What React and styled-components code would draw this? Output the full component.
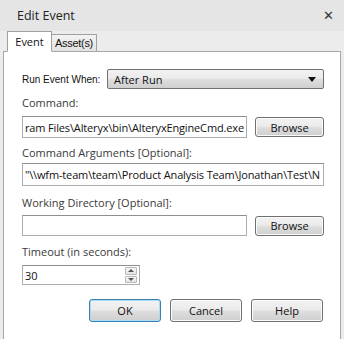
import React from 'react'
import styled, { createGlobalStyle } from 'styled-components'

const GlobalStyle = createGlobalStyle`
  html, body {
    margin: 0;
    padding: 0;
    background: #ececec;
  }
`

const Dialog = styled.div`
  width: 344px;
  height: 339px;
  overflow: hidden;
  background: #ececec;
  font-family: 'Open Sans', 'Noto Sans', sans-serif;
  color: #1e1e1e;
  display: flex;
  flex-direction: column;
`

const TitleBar = styled.div`
  height: 31px;
  flex: none;
  display: flex;
  align-items: center;
  justify-content: space-between;
  padding: 0 10px 0 17px;
  background: #e5e5e5;
  font-size: 12.5px;
  color: #222;
`

const CloseButton = styled.span`
  font-size: 13px;
  line-height: 1;
  color: #333;
  font-family: 'DejaVu Sans', sans-serif;
`

const TabStrip = styled.div`
  height: 20px;
  flex: none;
  display: flex;
  align-items: flex-end;
  padding-left: 7px;
  position: relative;
  z-index: 1;
`

const Tab = styled.div`
  display: flex;
  align-items: center;
  justify-content: center;
  box-sizing: border-box;
  border: 1px solid #a0a0a0;
  border-bottom: ${({ active }) => (active ? '1px solid #fff' : 'none')};
  background: ${({ active }) =>
    active ? '#fff' : 'linear-gradient(#f3f3f3, #e2e2e2)'};
  height: ${({ active }) => (active ? '21px' : '17px')};
  margin-bottom: ${({ active }) => (active ? '-1px' : '0')};
  width: ${({ w }) => w}px;
  margin-left: ${({ active }) => (active ? '0' : '-1px')};
  font-family: ${({ active }) =>
    active ? "'Open Sans', sans-serif" : "'Liberation Sans', Arial, sans-serif"};
  font-size: 11px;
  letter-spacing: ${({ active }) => (active ? '0' : '-0.3px')};
  color: #111;
`

const Panel = styled.div`
  flex: 1;
  margin: 0 3px 0 3px;
  border: 1px solid #a7a7a7;
  border-bottom: none;
  background: #fff;
  padding: 0 16px 0 18px;
  display: flex;
  flex-direction: column;
`

const Row = styled.div`
  display: flex;
  align-items: center;
  margin-top: ${({ mt }) => mt}px;
  height: ${({ h }) => h}px;
`

const SmallLabel = styled.span`
  font-family: 'Liberation Sans', Tahoma, sans-serif;
  font-size: 10px;
  color: #111;
  width: 85px;
  flex: none;
  white-space: nowrap;
`

const Label = styled.div`
  font-size: 11px;
  line-height: 16px;
  height: 16px;
  color: #3a3a3a;
  margin-top: ${({ mt }) => mt}px;
  white-space: nowrap;
`

const Select = styled.div`
  flex: 1;
  height: 100%;
  box-sizing: border-box;
  border: 1px solid #707070;
  border-radius: 2px;
  background: linear-gradient(#f2f2f2 0%, #ebebeb 45%, #dddddd 55%, #cfcfcf 100%);
  display: flex;
  align-items: center;
  justify-content: space-between;
  padding: 0 7px 0 6px;
  font-size: 11px;
  color: #111;
`

const Arrow = styled.span`
  width: 0;
  height: 0;
  border-left: 4px solid transparent;
  border-right: 4px solid transparent;
  border-top: 5px solid #111;
`

const Input = styled.div`
  box-sizing: border-box;
  height: 100%;
  width: ${({ w }) => (w ? `${w}px` : 'auto')};
  flex: ${({ w }) => (w ? 'none' : '1')};
  min-width: 0;
  border: 1px solid #abadb3;
  border-top-color: #8e8f8f;
  background: #fff;
  display: flex;
  align-items: center;
  padding-left: 2px;
  font-size: 11px;
  letter-spacing: -0.15px;
  color: #111;
  white-space: nowrap;
  overflow: hidden;
  position: relative;
`

const Button = styled.button`
  box-sizing: border-box;
  width: ${({ w }) => w}px;
  height: ${({ h }) => h || 23}px;
  margin-left: ${({ ml }) => ml || 0}px;
  flex: none;
  border: 1px solid ${({ primary }) => (primary ? '#3c7fb1' : '#707070')};
  box-shadow: ${({ primary }) => (primary ? 'inset 0 0 0 1px #a9dcf5' : 'inset 0 0 0 1px #fbfbfb')};
  border-radius: 3px;
  background: linear-gradient(#f2f2f2 0%, #ebebeb 45%, #dddddd 55%, #cfcfcf 100%);
  font-family: 'Open Sans', sans-serif;
  font-size: 11px;
  color: #111;
  padding: 0;
`

const Spinner = styled.div`
  position: absolute;
  right: 2px;
  top: 1px;
  bottom: 1px;
  width: 12px;
  display: flex;
  flex-direction: column;
  gap: 1px;
`

const SpinPart = styled.div`
  flex: 1;
  border: 1px solid #b9b9b9;
  border-radius: 1px;
  background: linear-gradient(#f7f7f7, #e4e4e4);
  display: flex;
  align-items: center;
  justify-content: center;
`

const SpinArrow = styled.span`
  width: 0;
  height: 0;
  border-left: 3px solid transparent;
  border-right: 3px solid transparent;
  ${({ up }) => (up ? 'border-bottom: 3px solid #555;' : 'border-top: 3px solid #555;')}
`

const ButtonRow = styled.div`
  display: flex;
  justify-content: flex-end;
  gap: 9px;
  margin-top: 14px;
  padding-right: 1px;
`

export default function App() {
  return (
    <Dialog>
      <GlobalStyle />
      <TitleBar>
        <span>Edit Event</span>
        <CloseButton>✕</CloseButton>
      </TitleBar>
      <TabStrip>
        <Tab active w={45}>Event</Tab>
        <Tab w={46}>Asset(s)</Tab>
      </TabStrip>
      <Panel>
        <Row mt={17} h={20}>
          <SmallLabel>Run Event When:</SmallLabel>
          <Select>
            <span>After Run</span>
            <Arrow />
          </Select>
        </Row>
        <Label mt={6}>Command:</Label>
        <Row mt={5} h={22}>
          <Input w={225}>ram Files\Alteryx\bin\AlteryxEngineCmd.exe</Input>
          <Button w={69} h={20} ml={8}>Browse</Button>
        </Row>
        <Label mt={7}>Command Arguments [Optional]:</Label>
        <Row mt={2} h={23}>
          <Input>"\\wfm-team\team\Product Analysis Team\Jonathan\Test\N</Input>
        </Row>
        <Label mt={9}>Working Directory [Optional]:</Label>
        <Row mt={4} h={21}>
          <Input w={225} />
          <Button w={69} h={20} ml={8}>Browse</Button>
        </Row>
        <Label mt={8}>Timeout (in seconds):</Label>
        <Row mt={5} h={20}>
          <Input w={118}>
            30
            <Spinner>
              <SpinPart><SpinArrow up /></SpinPart>
              <SpinPart><SpinArrow /></SpinPart>
            </Spinner>
          </Input>
        </Row>
        <ButtonRow>
          <Button w={72} primary>OK</Button>
          <Button w={72}>Cancel</Button>
          <Button w={72}>Help</Button>
        </ButtonRow>
      </Panel>
    </Dialog>
  )
}
